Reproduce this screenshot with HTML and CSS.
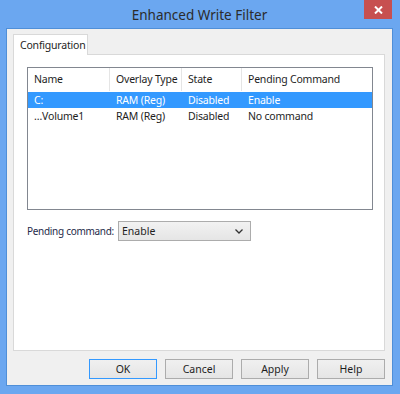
FILE: index.html
```html
<!DOCTYPE html>
<html lang="en">
<head>
  <meta charset="UTF-8" />
  <title>Enhanced Write Filter</title>
  <link rel="stylesheet" href="styles.css">
</head>
<body>
  <div class="window">
    <div class="titlebar">
      <div class="title">Enhanced Write Filter</div>
      <div class="close">
        <svg width="9" height="8" viewBox="0 0 9 8"><path d="M1 0.5 L8 7.5 M8 0.5 L1 7.5" stroke="#fff" stroke-width="2"/></svg>
      </div>
    </div>

    <div class="client">
      <!-- Tabs -->
      <div class="tabs">
        <div class="tab">Configuration</div>
      </div>

      <div class="panel">
        <div class="listview">
          <div class="lv-header">
            <div class="col c-name">Name</div>
            <div class="col c-type">Overlay Type</div>
            <div class="col c-state">State</div>
            <div class="col c-cmd">Pending Command</div>
          </div>
          <div class="lv-row selected">
            <div class="col c-name">C:</div>
            <div class="col c-type">RAM (Reg)</div>
            <div class="col c-state">Disabled</div>
            <div class="col c-cmd">Enable</div>
          </div>
          <div class="lv-row">
            <div class="col c-name">…Volume1</div>
            <div class="col c-type">RAM (Reg)</div>
            <div class="col c-state">Disabled</div>
            <div class="col c-cmd">No command</div>
          </div>
        </div>

        <div class="pending">
          <span class="pending-label">Pending command:</span>
          <div class="combo">
            <span>Enable</span>
            <svg width="8" height="5" viewBox="0 0 8 5"><path d="M0.5 0.5 L4 4 L7.5 0.5" fill="none" stroke="#333" stroke-width="1.3"/></svg>
          </div>
        </div>
      </div>

      <div class="buttons">
        <div class="btn default">OK</div>
        <div class="btn">Cancel</div>
        <div class="btn">Apply</div>
        <div class="btn">Help</div>
      </div>
    </div>
  </div>
</body>
</html>
```

FILE: styles.css
```css
:root {
  --frame: #6ba7f0;
  --frame-dark: #4f8fd8;
  --client: #f0f0f0;
  --border: #acacac;
  --text: #1e1e1e;
  --select: #3399ff;
}

body {
  margin: 0;
  font-family: "Noto Sans", "Open Sans", sans-serif;
  font-size: 10.5px;
  color: var(--text);
}

.window {
  width: 400px;
  height: 394px;
  box-sizing: border-box;
  background: var(--frame);
  padding: 0 8px 9px 7px;
  display: flex;
  flex-direction: column;
}

.titlebar {
  height: 29px;
  flex: none;
  position: relative;
  display: flex;
  justify-content: center;
  align-items: center;
}

.title {
  font-size: 13.5px;
  color: #2b2b2b;
}

.close {
  position: absolute;
  top: 0;
  right: 0;
  width: 28px;
  height: 19px;
  background: #c75050;
  display: flex;
  align-items: center;
  justify-content: center;
}

.client {
  flex: 1;
  background: var(--client);
  outline: 1px solid var(--frame-dark);
  padding: 5px 7px 0 6px;
  display: flex;
  flex-direction: column;
}

.tabs {
  display: flex;
  height: 20px;
}

.tab {
  width: 75px;
  box-sizing: border-box;
  border: 1px solid #d9d9d9;
  border-bottom: none;
  background: #fff;
  padding: 3px 0 0 6px;
  position: relative;
  z-index: 1;
  height: 21px;
  letter-spacing: -0.2px;
}

.panel {
  height: 297px;
  box-sizing: border-box;
  border: 1px solid #d9d9d9;
  background: #fff;
  padding: 12px 11px 0 13px;
}

.listview {
  height: 143px;
  box-sizing: border-box;
  border: 1px solid #828790;
  background: #fff;
}

.lv-header,
.lv-row {
  display: flex;
}

.lv-header {
  height: 23px;
  align-items: center;
}

.lv-header .col {
  border-right: 1px solid #e5e5e5;
  height: 23px;
  line-height: 23px;
}

.lv-row {
  height: 16px;
  line-height: 16px;
}

.lv-row.selected {
  background: var(--select);
  color: #fff;
  margin-top: 1px;
}

.col {
  box-sizing: border-box;
  padding-left: 6px;
  white-space: nowrap;
  letter-spacing: -0.2px;
}

.c-name { width: 82px; }
.c-type { width: 72px; }
.c-state { width: 60px; }
.c-cmd { width: 130px; border-right: none !important; }

.pending {
  display: flex;
  align-items: center;
  margin-top: 11px;
}

.pending-label {
  flex: none;
  width: 91px;
  white-space: nowrap;
  font-size: 10px;
  letter-spacing: -0.3px;
  color: #1e2a4a;
}

.combo {
  width: 133px;
  height: 20px;
  box-sizing: border-box;
  border: 1px solid #acacac;
  background: linear-gradient(#f2f2f2, #e5e5e5);
  display: flex;
  align-items: center;
  justify-content: space-between;
  padding: 0 7px 0 3px;
}

.buttons {
  display: flex;
  justify-content: flex-end;
  gap: 8px;
  margin-top: 8px;
}

.btn {
  width: 68px;
  height: 20px;
  box-sizing: border-box;
  border: 1px solid #acacac;
  background: linear-gradient(#f0f0f0, #e5e5e5);
  display: flex;
  align-items: center;
  justify-content: center;
}

.btn.default {
  border-color: #3399ff;
}
```
